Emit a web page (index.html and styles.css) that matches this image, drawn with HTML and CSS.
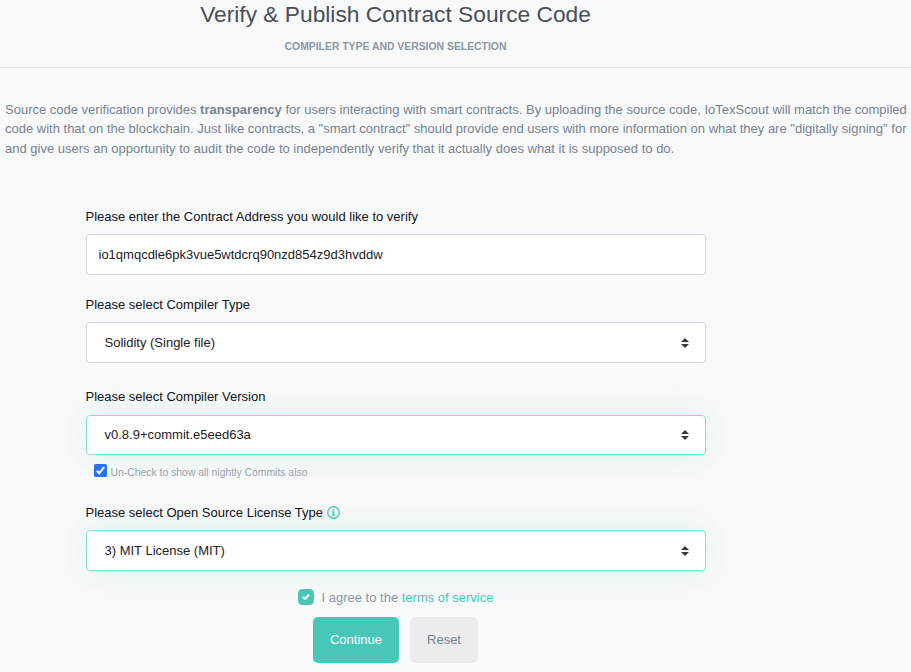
FILE: index.html
```html
<!DOCTYPE html>
<html lang="en">
<head>
<meta charset="utf-8">
<title>Verify &amp; Publish Contract Source Code</title>
<link rel="stylesheet" href="styles.css">
</head>
<body>
<header class="page-header">
  <h1 class="title">Verify &amp; Publish Contract Source Code</h1>
  <p class="subtitle">COMPILER TYPE AND VERSION SELECTION</p>
</header>
<p class="intro">Source code verification provides <b>transparency</b> for users interacting with smart contracts. By uploading the source code, IoTexScout will match the compiled<br>code with that on the blockchain. Just like contracts, a "smart contract" should provide end users with more information on what they are "digitally signing" for<br>and give users an opportunity to audit the code to independently verify that it actually does what it is supposed to do.</p>
<main class="form">
  <div class="field field-address">
    <div class="label">Please enter the Contract Address you would like to verify</div>
    <div class="control control-input">io1qmqcdle6pk3vue5wtdcrq90nzd854z9d3hvddw</div>
  </div>
  <div class="field field-type">
    <div class="label">Please select Compiler Type</div>
    <div class="control">Solidity (Single file)
      <svg class="arrows" viewBox="0 0 8 10"><path d="M4 0 8 4H0zM4 10 0 6H8z"/></svg>
    </div>
  </div>
  <div class="field field-version">
    <div class="label">Please select Compiler Version</div>
    <div class="control valid control-short">v0.8.9+commit.e5eed63a
      <svg class="arrows" viewBox="0 0 8 10"><path d="M4 0 8 4H0zM4 10 0 6H8z"/></svg>
    </div>
    <div class="nightly">
      <svg class="native-check" viewBox="0 0 13 13"><rect width="13" height="13" rx="1.5"/><path d="M2.8 6.7 5.2 9.2 10.2 3.2"/></svg>
      <span class="nightly-text">Un-Check to show all nightly Commits also</span>
    </div>
  </div>
  <div class="field field-license">
    <div class="label">Please select Open Source License Type
      <svg class="info" viewBox="0 0 13 13"><circle cx="6.5" cy="6.5" r="5.75"/><path d="M5.6 2.9h1.8v1.6H5.6zM4.9 5.3h2.5v3.4h.8v1.1H4.8V8.7h.8V6.4h-.7z"/></svg>
    </div>
    <div class="control valid">3) MIT License (MIT)
      <svg class="arrows" viewBox="0 0 8 10"><path d="M4 0 8 4H0zM4 10 0 6H8z"/></svg>
    </div>
  </div>
  <div class="agree">
    <svg class="agree-check" viewBox="0 0 16 16"><rect width="16" height="16" rx="4.5"/><path d="M4.8 7.9 7 9.8 11 5.7"/></svg>
    <span class="agree-text">I agree to the <a class="terms">terms of service</a></span>
  </div>
  <div class="actions">
    <div class="btn btn-primary">Continue</div>
    <div class="btn btn-secondary">Reset</div>
  </div>
</main>
</body>
</html>
```
FILE: styles.css
```css
* { box-sizing: border-box; }
body {
  margin: 0;
  height: 672px;
  overflow: hidden;
  background: #f8f9fb;
  font: 13px/19.5px "Liberation Sans", Arial, sans-serif;
  color: #1e2022;
}
.page-header {
  height: 68px;
  padding-right: 120px;
  border-bottom: 1px solid #e3e7ec;
  text-align: center;
}
.title {
  margin: 0;
  color: #4a4f55;
  font-size: 22.75px;
  font-weight: 400;
  line-height: 28px;
}
.subtitle {
  margin: 11px 0 0;
  color: #8c98a4;
  font-size: 10.4px;
  font-weight: 700;
  line-height: 16px;
}
.intro {
  height: 58.2px;
  margin: 31.8px 0 0 5px;
  color: #77838f;
  white-space: nowrap;
}
.form { width: 620px; margin: 48px 0 0 86px; }
.label { display: flex; align-items: center; height: 20px; margin-left: -.5px; padding-top: 1px; color: #111418; }
.control {
  display: flex;
  align-items: center;
  justify-content: space-between;
  height: 41px;
  margin-top: 8px;
  padding: 0 16px 0 17.5px;
  border: 1px solid #d5dae2;
  border-radius: 4px;
  background: #fff;
}
.control-input { padding-left: 11.5px; }
.control-short { height: 40px; }
.valid { border-color: #80e0d0; box-shadow: 0 0 35px rgba(0, 175, 135, .11); }
.arrows { width: 8px; height: 10px; margin-top: 1px; fill: #343a40; }
.control-short .arrows { margin-top: 0; }
.field-type { margin-top: 19px; }
.field-version { margin-top: 23.5px; }
.field-version .control { margin-top: 8.5px; }
.nightly { display: flex; align-items: center; height: 15px; margin: 8px 0 0 8px; color: #97a4af; font-size: 10.4px; gap: 3.5px; }
.nightly-text { padding-top: 4px; }
.native-check { width: 13px; height: 13px; fill: #2872fa; }
.native-check path { fill: none; stroke: #fff; stroke-width: 2; }
.field-license { margin-top: 24px; }
.info { width: 13px; height: 13px; margin-left: 4px; fill: #48c7b9; }
.info circle { fill: none; stroke: #48c7b9; stroke-width: 1.3; }
.agree { display: flex; align-items: center; height: 20px; margin: 16px 0 0 212px; gap: 7.5px; color: #8c98a4; }
.agree-text { padding-top: 1px; }
.agree-check { width: 16px; height: 16px; fill: #48c7b9; }
.agree-check path { fill: none; stroke: #fff; stroke-width: 2; }
.terms { color: #48c7b9; }
.actions { display: flex; gap: 11px; margin: 10px 0 0 227px; }
.btn { display: flex; align-items: center; justify-content: center; height: 46px; border-radius: 5px; }
.btn-primary { width: 86px; background: #48c7b9; color: #fff; }
.btn-secondary { width: 68px; background: #ebecf0; color: #77838f; }
```
